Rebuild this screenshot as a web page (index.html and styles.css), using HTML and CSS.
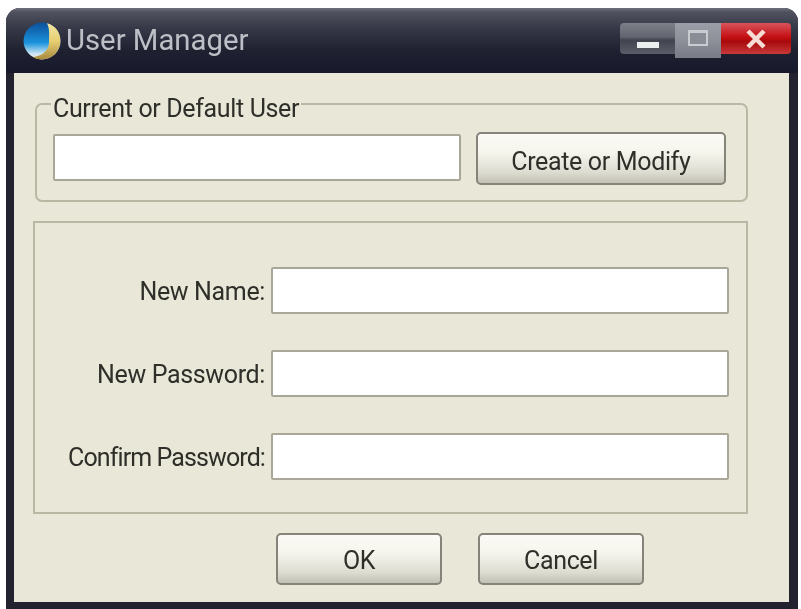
FILE: index.html
```html
<!DOCTYPE html>
<html lang="en">
<head>
    <meta charset="UTF-8">
    <title>User Manager</title>
    <link rel="stylesheet" href="styles.css">
</head>
<body>
    <div class="window">
        <div class="titlebar">
            <svg class="app-icon" width="38" height="38" viewBox="0 0 38 38">
                <defs>
                    <linearGradient id="globeBlue" x1="0" y1="0" x2="0" y2="1">
                        <stop offset="0" stop-color="#0d4f9a"/>
                        <stop offset="0.55" stop-color="#1a93dc"/>
                        <stop offset="0.85" stop-color="#cfe6f2"/>
                        <stop offset="1" stop-color="#f1efe0"/>
                    </linearGradient>
                    <linearGradient id="globeGold" x1="0" y1="0" x2="0" y2="1">
                        <stop offset="0" stop-color="#f2e6a0"/>
                        <stop offset="0.5" stop-color="#e6cd72"/>
                        <stop offset="1" stop-color="#a98a3c"/>
                    </linearGradient>
                </defs>
                <circle cx="19" cy="19" r="18.5" fill="url(#globeBlue)"/>
                <path d="M24 1.2C33 3.5 37.5 11 37.5 19C37.5 29 29 37.5 19 37.5C15 37.5 12 36.5 10 35C19 34 26 29 26 20C26 13 27 7 24 1.2Z" fill="url(#globeGold)"/>
            </svg>
            <span class="title">User Manager</span>
            <div class="caption-buttons">
                <div class="caption-btn min"><span class="min-bar"></span></div>
                <div class="caption-btn max"><span class="max-box"></span></div>
                <div class="caption-btn close">
                    <svg width="22" height="20" viewBox="0 0 22 20"><path d="M3 2L19 18M19 2L3 18" stroke="#f6dcd4" stroke-width="4.5" fill="none"/></svg>
                </div>
            </div>
        </div>

        <div class="client">
            <div class="user-group">
                <span class="group-label">Current or Default User</span>
                <input type="text" class="field current-user">
                <button class="btn create-btn">Create or Modify</button>
            </div>

            <div class="form-panel">
                <label class="form-label" for="newName">New Name:</label>
                <input type="text" class="field" id="newName">
                <label class="form-label" for="newPassword">New Password:</label>
                <input type="password" class="field" id="newPassword">
                <label class="form-label tight" for="confirmPassword">Confirm Password:</label>
                <input type="password" class="field" id="confirmPassword">
            </div>

            <div class="actions">
                <button class="btn action-btn">OK</button>
                <button class="btn action-btn">Cancel</button>
            </div>
        </div>
    </div>
</body>
</html>
```

FILE: styles.css
```css
/* Reset and base styles */
* {
    box-sizing: border-box;
    margin: 0;
    padding: 0;
}

html, body {
    height: 100%;
    overflow: hidden;
}

body {
    background-color: #fff;
    font-family: Roboto, "Liberation Sans", Arial, sans-serif;
    font-size: 25px;
    letter-spacing: -0.35px;
    color: #2f2f2a;
    padding: 8px 3px 0 6px;
}

/* Window frame */
.window {
    height: 601px;
    display: flex;
    flex-direction: column;
    background-color: #23232f;
    border-radius: 14px 14px 0 0;
    padding: 0 9px 7px 8px;
    filter: blur(0.7px);
}

.titlebar {
    height: 65px;
    margin: 0 -9px 0 -8px;
    padding: 14px 7px 0 17px;
    display: flex;
    align-items: flex-start;
    border-radius: 14px 14px 0 0;
    background: linear-gradient(to bottom, #6f717f 0, #50525f 6%, #373948 30%, #1f2030 65%, #17182a 100%);
}

.app-icon {
    flex-shrink: 0;
}

.title {
    margin: 1px 0 0 5px;
    font-size: 29.3px;
    letter-spacing: 0;
    line-height: 34px;
    color: #bcc0c6;
    flex: 1;
}

.caption-buttons {
    display: flex;
    margin-top: 1px;
}

.caption-btn {
    display: flex;
    align-items: center;
    justify-content: center;
    height: 31px;
}

.caption-btn.min {
    width: 55px;
    padding-top: 12px;
    border-radius: 4px 0 0 4px;
    background: linear-gradient(to bottom, #7d8089 0, #62646f 45%, #41434f 55%, #5b5d68 100%);
}

.min-bar {
    width: 22px;
    height: 6px;
    background-color: #eceff0;
}

.caption-btn.max {
    width: 46px;
    height: 35px;
    background: linear-gradient(to bottom, #9b9ea6 0, #8d9099 50%, #787b85 100%);
    padding-bottom: 6px;
}

.max-box {
    width: 20px;
    height: 16px;
    border: 2px solid #c8ccd0;
    border-top-width: 3px;
    background-color: #8a8d96;
}

.caption-btn.close {
    width: 70px;
    border-radius: 0 4px 4px 0;
    background: linear-gradient(to bottom, #d8545a 0, #c41014 45%, #a80a0c 60%, #c83a3a 100%);
}

/* Client area */
.client {
    flex: 1;
    background-color: #e9e8d8;
    padding: 30px 41px 0 19px;
}

.user-group {
    position: relative;
    height: 99px;
    margin: 0 0 19px 2px;
    border: 2px solid #b9b8a4;
    border-radius: 7px;
    padding: 27px 20px 0 16px;
    display: flex;
    align-items: flex-start;
    gap: 15px;
}

.group-label {
    position: absolute;
    left: 14px;
    top: -10px;
    padding: 0 2px;
    line-height: 28px;
    height: 26px;
    background-color: #e9e8d8;
}

.field {
    display: block;
    width: 100%;
    background-color: #fff;
    border: 2px solid #a9a898;
    border-radius: 2px;
    outline: none;
}

.current-user {
    width: 409px;
    height: 47px;
    margin-top: 2px;
}

.btn {
    font-family: inherit;
    font-size: inherit;
    letter-spacing: inherit;
    color: #2f2f2a;
    border: 2px solid #85847a;
    border-radius: 5px;
    padding-top: 2px;
    background: linear-gradient(to bottom, #fbfaf5 0, #f5f4ec 40%, #dddcd1 78%, #c2c1b4 100%);
}

.create-btn {
    width: 251px;
    height: 53px;
    padding-top: 5px;
}

/* Name and password panel */
.form-panel {
    width: 715px;
    height: 293px;
    border: 2px solid #b9b8a4;
    padding: 44px 18px 0 0;
    display: grid;
    grid-template-columns: 230px 458px;
    grid-auto-rows: 47px;
    column-gap: 6px;
    row-gap: 36px;
    align-items: center;
}

.form-label {
    text-align: right;
    white-space: nowrap;
    padding-top: 2px;
}

.form-label.tight {
    letter-spacing: -0.9px;
}

.form-panel .field {
    height: 47px;
}

/* OK / Cancel */
.actions {
    display: flex;
    gap: 36px;
    margin: 19px 0 0 243px;
}

.action-btn {
    width: 166px;
    height: 52px;
}
```
